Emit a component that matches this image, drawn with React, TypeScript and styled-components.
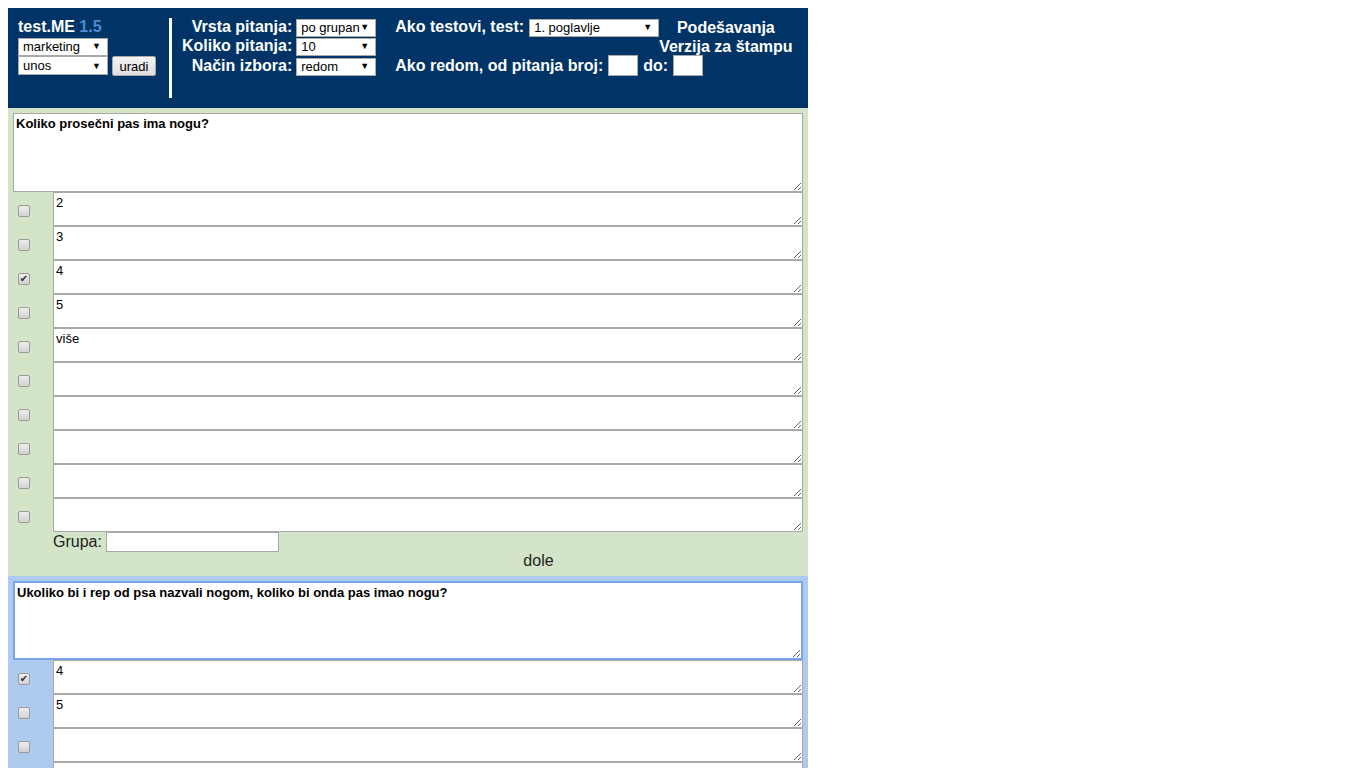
import React from "react";
import styled, { createGlobalStyle } from "styled-components";

const GlobalStyle = createGlobalStyle`
    html {
        overflow-y: scroll;
    }
    body {
        margin: 8px;
        background: #ffffff;
        font-family: "Liberation Sans", Arial, sans-serif;
    }
`;

const Page = styled.div`
    width: 800px;
`;

const Header = styled.div`
    height: 100px;
    box-sizing: border-box;
    background: #003466;
    padding: 10px 14px 0 10px;
    display: flex;
    align-items: flex-start;
    color: #ffffff;
    font: bold 16px "Liberation Sans", Arial, sans-serif;
`;

const Brand = styled.div`
    display: flex;
    flex-direction: column;
    gap: 1px;
    flex-shrink: 0;
`;

const Title = styled.div`
    line-height: 18px;
`;

const Version = styled.span`
    color: #4f8ad2;
`;

const BrandRow = styled.div`
    display: flex;
    gap: 4px;
    align-items: flex-start;
`;

const SelectWrap = styled.span<{ $w: number; $h?: number }>`
    position: relative;
    display: inline-block;
    flex-shrink: 0;
    width: ${(p) => p.$w}px;
    height: ${(p) => p.$h ?? 18}px;
`;

const NativeSelect = styled.select`
    appearance: none;
    width: 100%;
    height: 100%;
    box-sizing: border-box;
    border: 1px solid #a9a9a9;
    background: #ffffff;
    color: #000000;
    font: 13px "Liberation Sans", Arial, sans-serif;
    padding: 0 0 0 4px;
    margin: 0;
    border-radius: 0;
`;

const Arrow = styled.span`
    position: absolute;
    right: 7px;
    top: 50%;
    transform: translateY(-50%);
    font-size: 9px;
    color: #000;
    pointer-events: none;
`;

const Button = styled.button`
    height: 20px;
    width: 44px;
    padding: 0;
    font: 13px "Liberation Sans", Arial, sans-serif;
    color: #000;
    background: linear-gradient(#f4f4f4, #dedede);
    border: 1px solid #a9a9a9;
    border-radius: 2px;
`;

const Divider = styled.div`
    flex-shrink: 0;
    width: 3px;
    height: 80px;
    background: #ffffff;
    margin: 0 10px 0 13px;
`;

const SettingsGrid = styled.div`
    flex-shrink: 0;
    display: grid;
    grid-template-columns: auto auto;
    grid-template-rows: 18px 18px 20px;
    row-gap: 1px;
    column-gap: 4px;
    align-items: center;
`;

const Label = styled.span`
    text-align: right;
    white-space: nowrap;
    line-height: 18px;
`;

const TestGrid = styled.div`
    flex-shrink: 0;
    margin-left: 19px;
    display: grid;
    grid-template-columns: auto auto;
    grid-template-rows: 18px 19px 21px;
    align-items: center;
`;

const InlineRow = styled.div`
    display: flex;
    align-items: center;
    gap: 5px;
    white-space: nowrap;
`;

const Links = styled.div`
    grid-row: span 2;
    align-self: start;
    display: flex;
    flex-direction: column;
    align-items: center;
    line-height: 19px;
    white-space: nowrap;
`;

const FullRow = styled(InlineRow)`
    grid-column: span 2;
`;

const SmallInput = styled.input`
    width: 30px;
    height: 21px;
    box-sizing: border-box;
    border: 1px solid #a9a9a9;
    margin: 0;
`;

const Block = styled.div<{ $bg: string }>`
    background: ${(p) => p.$bg};
    padding: 5px 5px 6px 5px;
`;

const QuestionArea = styled.textarea<{ $focus?: boolean }>`
    display: block;
    width: 790px;
    height: 79px;
    box-sizing: border-box;
    margin: 0;
    padding: 2px;
    border: ${(p) => (p.$focus ? "2px solid #7aa4e8" : "1px solid #a9a9a9")};
    font: bold 13px "Liberation Sans", Arial, sans-serif;
    color: #000;
    resize: both;
    outline: none;
`;

const AnswerRow = styled.div`
    display: flex;
    align-items: center;
    margin-left: -5px;
`;

const CheckCell = styled.div`
    width: 45px;
    display: flex;
    align-items: center;
    padding: 4px 0 0 10px;
    box-sizing: border-box;
`;

const Check = styled.input`
    appearance: none;
    width: 12px;
    height: 12px;
    margin: 0;
    box-sizing: border-box;
    border: 1px solid #9a9a9a;
    border-radius: 2px;
    background: linear-gradient(#ededed, #d2d2d2);
    display: flex;
    align-items: center;
    justify-content: center;

    &:checked::after {
        content: "✔";
        font: bold 10px "DejaVu Sans", sans-serif;
        color: #2f2f2f;
        line-height: 1;
    }
`;

const AnswerArea = styled.textarea`
    display: block;
    width: 750px;
    height: 34px;
    box-sizing: border-box;
    margin: 0;
    padding: 2px;
    border: 1px solid #a9a9a9;
    font: 13px "Liberation Sans", Arial, sans-serif;
    color: #000;
    resize: both;
    outline: none;
`;

const GroupRow = styled.div`
    display: flex;
    align-items: flex-start;
    margin-left: 40px;
    margin-right: 5px;
    font: 16px "Liberation Sans", Arial, sans-serif;
    color: #222;
`;

const GroupLabel = styled.label`
    display: flex;
    align-items: center;
    gap: 4px;
    height: 20px;
`;

const GroupInput = styled.input`
    width: 173px;
    height: 20px;
    box-sizing: border-box;
    border: 1px solid #a9a9a9;
    margin: 0;
`;

const Dole = styled.div`
    flex: 1;
    text-align: center;
    padding-top: 20px;
    line-height: 18px;
`;

function Select({ w, h, value }: { w: number; h?: number; value: string }) {
    return (
        <SelectWrap $w={w} $h={h}>
            <NativeSelect defaultValue={value}>
                <option>{value}</option>
            </NativeSelect>
            <Arrow>▼</Arrow>
        </SelectWrap>
    );
}

type Question = {
    text: string;
    answers: string[];
    correct: number[];
    bg: string;
    focus?: boolean;
};

const questions: Question[] = [
    {
        text: "Koliko prosečni pas ima nogu?",
        answers: ["2", "3", "4", "5", "više", "", "", "", "", ""],
        correct: [2],
        bg: "#d3e4c8",
    },
    {
        text: "Ukoliko bi i rep od psa nazvali nogom, koliko bi onda pas imao nogu?",
        answers: ["4", "5", "", "", "", "", "", "", "", ""],
        correct: [0],
        bg: "#aecbef",
        focus: true,
    },
];

function QuestionBlock({ q }: { q: Question }) {
    return (
        <Block $bg={q.bg}>
            <QuestionArea $focus={q.focus} defaultValue={q.text} />
            {q.answers.map((a, i) => (
                <AnswerRow key={i}>
                    <CheckCell>
                        <Check
                            type="checkbox"
                            defaultChecked={q.correct.includes(i)}
                        />
                    </CheckCell>
                    <AnswerArea defaultValue={a} />
                </AnswerRow>
            ))}
            <GroupRow>
                <GroupLabel>
                    Grupa:
                    <GroupInput type="text" />
                </GroupLabel>
                <Dole>dole</Dole>
            </GroupRow>
        </Block>
    );
}

export default function App() {
    return (
        <Page>
            <GlobalStyle />
            <Header>
                <Brand>
                    <Title>
                        test.ME <Version>1.5</Version>
                    </Title>
                    <Select w={90} value="marketing" />
                    <BrandRow>
                        <Select w={90} h={19} value="unos" />
                        <Button>uradi</Button>
                    </BrandRow>
                </Brand>
                <Divider />
                <SettingsGrid>
                    <Label>Vrsta pitanja:</Label>
                    <Select w={80} value="po grupan" />
                    <Label>Koliko pitanja:</Label>
                    <Select w={80} value="10" />
                    <Label>Način izbora:</Label>
                    <Select w={80} value="redom" />
                </SettingsGrid>
                <TestGrid>
                    <InlineRow>
                        Ako testovi, test:
                        <Select w={130} value="1. poglavlje" />
                    </InlineRow>
                    <Links>
                        <span>Podešavanja</span>
                        <span>Verzija za štampu</span>
                    </Links>
                    <div />
                    <FullRow>
                        Ako redom, od pitanja broj:
                        <SmallInput type="text" />
                        do:
                        <SmallInput type="text" />
                    </FullRow>
                </TestGrid>
            </Header>
            {questions.map((q, i) => (
                <QuestionBlock key={i} q={q} />
            ))}
        </Page>
    );
}
